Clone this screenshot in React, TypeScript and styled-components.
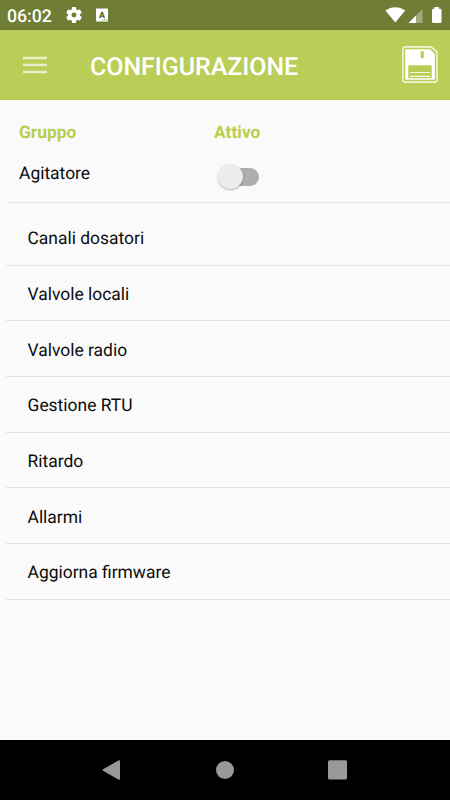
import React from "react";
import styled, { createGlobalStyle } from "styled-components";

const GlobalStyle = createGlobalStyle`
  html, body { margin: 0; padding: 0; }
  * { box-sizing: border-box; }
`;

const Screen = styled.div`
  width: 450px;
  height: 800px;
  display: flex;
  flex-direction: column;
  background: #fafafa;
  color: #0c0c0c;
  font-family: Roboto, "Liberation Sans", sans-serif;
  text-rendering: geometricPrecision;
  overflow: hidden;
`;

const StatusBar = styled.header`
  height: 30px;
  flex: none;
  display: flex;
  align-items: center;
  padding: 0 7px;
  background: #707d35;
  color: #fff;
`;

const Clock = styled.span`
  width: 58px;
  padding-top: 4px;
  font-size: 17.7px;
  line-height: 26px;
  font-weight: 500;
`;

const StatusIcons = styled.svg`
  display: block;
  flex: none;
`;

const KeyboardBadge = styled.svg`
  display: block;
  flex: none;
  margin-left: 13px;
`;

const Spacer = styled.div`
  flex: 1;
`;

const AppBar = styled.div`
  height: 70px;
  flex: none;
  display: flex;
  align-items: center;
  padding: 0 12px 0 23px;
  background: #bace57;
  border-bottom: 1px solid #b5cb49;
`;

const IconButton = styled.button`
  display: block;
  padding: 0;
  border: 0;
  background: none;
  line-height: 0;
`;

const Title = styled.h1`
  flex: 1;
  margin: 6px 0 0 43px;
  font-size: 24.9px;
  line-height: 32px;
  font-weight: 500;
  color: #fff;
`;

const GroupGrid = styled.section`
  display: grid;
  grid-template-columns: 195px 1fr;
  grid-template-rows: 41px 42px;
  align-items: center;
  height: 102.5px;
  flex: none;
  margin-left: 6px;
  padding: 12px 0 0 13px;
  border-bottom: 1.5px solid #e6e6e6;
`;

const ColumnHeading = styled.div`
  font-size: 17.4px;
  line-height: 24px;
  font-weight: 700;
  color: #b8ce49;
`;

const GroupName = styled.div`
  font-size: 17.45px;
  line-height: 24px;
`;

const Switch = styled.button`
  width: 46px;
  height: 30px;
  margin: 5px 0 0 3px;
  padding: 0;
  border: 0;
  background: none;
  display: flex;
  align-items: center;
`;

const Track = styled.span`
  display: flex;
  align-items: center;
  width: 38px;
  height: 18px;
  margin-left: 4px;
  border-radius: 9px;
  background: #aeaeae;
`;

const Knob = styled.span`
  width: 25px;
  height: 25px;
  flex: none;
  margin-left: -3px;
  border-radius: 50%;
  background: #ececec;
  box-shadow: 0 1px 2px rgba(0, 0, 0, 0.3);
`;

const Menu = styled.ul`
  list-style: none;
  flex: 1;
  margin: 7.5px 0 0 6px;
  padding: 0;
`;

const MenuItem = styled.li`
  display: flex;
  align-items: center;
  height: 55.7px;
  padding: 4px 0 0 21.5px;
  border-bottom: 1px solid #e3e3e3;
  font-size: 17.45px;
  line-height: 24px;
`;

const NavBar = styled.nav`
  height: 60px;
  flex: none;
  display: flex;
  align-items: center;
  justify-content: center;
  gap: 94px;
  padding-right: 1px;
  background: #000;
`;

const items = [
  "Canali dosatori",
  "Valvole locali",
  "Valvole radio",
  "Gestione RTU",
  "Ritardo",
  "Allarmi",
  "Aggiorna firmware",
];

const SettingsGear = () => (
  <StatusIcons width="18" height="18" viewBox="3 3 18 18">
    <path
      fill="#fff"
      d="M19.14 12.94c.04-.3.06-.61.06-.94 0-.32-.02-.64-.07-.94l2.03-1.58a.49.49 0 0 0 .12-.61l-1.92-3.32a.49.49 0 0 0-.59-.22l-2.39.96c-.5-.38-1.03-.7-1.62-.94l-.36-2.54a.48.48 0 0 0-.48-.41h-3.84a.47.47 0 0 0-.47.41l-.36 2.54c-.59.24-1.13.57-1.62.94l-2.39-.96a.48.48 0 0 0-.59.22L2.74 8.87a.47.47 0 0 0 .12.61l2.03 1.58c-.05.3-.09.63-.09.94s.02.64.07.94l-2.03 1.58a.49.49 0 0 0-.12.61l1.92 3.32c.12.22.37.29.59.22l2.39-.96c.5.38 1.03.7 1.62.94l.36 2.54c.05.24.24.41.48.41h3.84c.24 0 .44-.17.47-.41l.36-2.54c.59-.24 1.13-.56 1.62-.94l2.39.96c.22.08.47 0 .59-.22l1.92-3.32a.47.47 0 0 0-.12-.61zM12 15a3 3 0 1 1 0-6 3 3 0 0 1 0 6z"
      transform="translate(12 12) scale(.83) translate(-12 -12)"
    />
  </StatusIcons>
);

export default function App() {
  return (
    <>
      <GlobalStyle />
      <Screen>
        <StatusBar>
          <Clock>06:02</Clock>
          <SettingsGear />
          <KeyboardBadge width="12" height="14" viewBox="0 0 12 14">
            <rect y=".5" width="12" height="13" fill="#fff" />
            <text x="6" y="10" textAnchor="middle" fontSize="8.8" fontWeight="900" fill="#59632b">
              A
            </text>
            <path d="M6.2 11.8h1M8.2 11.8h1M10.2 11.8h1" stroke="#707d35" strokeWidth="1" />
          </KeyboardBadge>
          <Spacer />
          <StatusIcons width="58" height="30" viewBox="385 0 58 30">
            <path fill="#fff" d="M395.3 22.5 L385.4 10.6 C391 6 399.6 6 405.2 10.6 Z" />
            <path fill="#a0a97a" d="M422.5 9 V23 H408.5 Z" />
            <path fill="#fff" d="M416 15.5 V23 H408.5 Z" />
            <path fill="#fff" d="M434.4 7 H439 V8.7 H440.3 Q441.5 8.7 441.5 9.9 V21.8 Q441.5 23 440.3 23 H433.2 Q432 23 432 21.8 V9.9 Q432 8.7 433.2 8.7 H434.4 Z" />
          </StatusIcons>
        </StatusBar>
        <AppBar>
          <IconButton aria-label="Menu">
            <svg width="24" height="18" viewBox="0 0 24 18">
              <path d="M0 2.1H24M0 9H24M0 15.9H24" stroke="#e8f0c8" strokeWidth="2.5" />
            </svg>
          </IconButton>
          <Title>CONFIGURAZIONE</Title>
          <IconButton aria-label="Salva">
            <svg width="36" height="37" viewBox="0 0 36 37" fill="none">
              <path
                d="M3.4 .9H29.3L35 6.4V33.6Q35 36.1 32.6 36.1H3.4Q.9 36.1 .9 33.6V3.4Q.9 .9 3.4 .9Z"
                stroke="#eff4d8"
                strokeWidth="1.6"
              />
              <path
                d="M4.5 3.2H28L32.8 8V32.5Q32.8 33.7 31.6 33.7H4.4Q3.2 33.7 3.2 32.5V4.5Q3.2 3.2 4.5 3.2Z"
                fill="#fff"
              />
              <path d="M18.6 5.3H21.8V12.2H18.6ZM7.6 19.3H28.4Q29.7 19.3 29.7 20.6V32.3H6.3V20.6Q6.3 19.3 7.6 19.3Z" fill="#b9cd55" />
              <path d="M8 26.5H28M8 30.4H28" stroke="#f3f7e3" strokeWidth="1.2" />
            </svg>
          </IconButton>
        </AppBar>
        <GroupGrid>
          <ColumnHeading>Gruppo</ColumnHeading>
          <ColumnHeading>Attivo</ColumnHeading>
          <GroupName>Agitatore</GroupName>
          <Switch role="switch" aria-checked="false" aria-label="Agitatore">
            <Track>
              <Knob />
            </Track>
          </Switch>
        </GroupGrid>
        <Menu>
          {items.map((item) => (
            <MenuItem key={item}>{item}</MenuItem>
          ))}
        </Menu>
        <NavBar>
          <svg width="20" height="20" viewBox="0 0 20 20">
            <path d="M1 9.2 L16.8 .3 Q18 0 18 1.2 V18.8 Q18 20 16.8 19.7 L1 10.8 Q0 10 1 9.2Z" fill="#999" />
          </svg>
          <svg width="18" height="18" viewBox="0 0 18 18">
            <circle cx="9" cy="9" r="9" fill="#999" />
          </svg>
          <svg width="19" height="20" viewBox="0 0 19 20">
            <rect y=".3" width="19" height="19.3" rx="1.5" fill="#999" />
          </svg>
        </NavBar>
      </Screen>
    </>
  );
}
